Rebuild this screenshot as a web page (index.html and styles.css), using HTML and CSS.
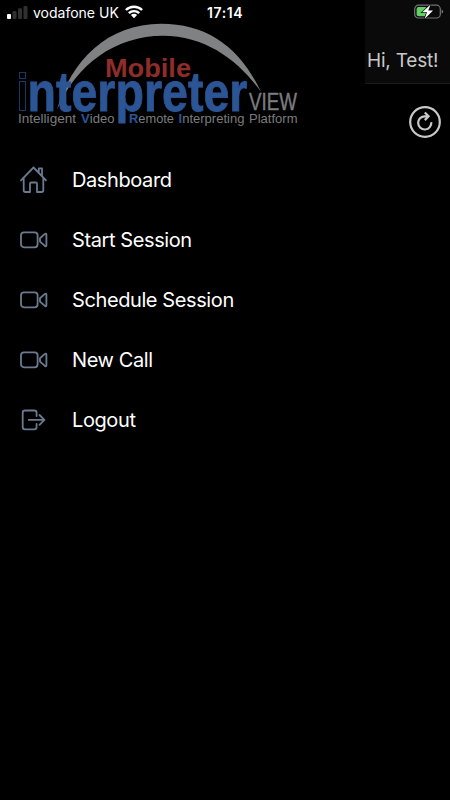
FILE: index.html
```html
<!DOCTYPE html>
<html lang="en">
<head>
  <meta charset="UTF-8">
  <meta name="viewport" content="width=device-width, initial-scale=1.0">
  <title>Mobile Interpreter View</title>
  <link rel="stylesheet" href="styles.css">
</head>
<body>
  <div class="status-bar">
    <svg class="signal" width="21" height="14" viewBox="0 0 21 14">
      <rect x="0" y="9" width="4" height="5" rx="1" fill="#fff"/>
      <rect x="5.5" y="6" width="4" height="8" rx="1" fill="#303030"/>
      <rect x="11" y="3.3" width="4" height="10.7" rx="1" fill="#303030"/>
      <rect x="16.5" y="1" width="4" height="13" rx="1" fill="#303030"/>
    </svg>
    <span class="carrier">vodafone UK</span>
    <svg class="wifi" width="18" height="14" viewBox="0 0 18 14" fill="none" stroke="#fff" stroke-width="2.4">
      <path d="M0.9 5A11.6 11.6 0 0 1 17.1 5"/>
      <path d="M3.8 8.2A7.5 7.5 0 0 1 14.2 8.2"/>
      <path d="M9 13.2L5.9 10.1A4.3 4.3 0 0 1 12.1 10.1Z" fill="#fff" stroke="none"/>
    </svg>
    <span class="time">17:14</span>
    <svg class="battery" width="30" height="16" viewBox="0 0 30 16">
      <rect x="0.7" y="1.2" width="25.6" height="12.8" rx="3.8" fill="none" stroke="#737373" stroke-width="1.2"/>
      <rect x="2.6" y="3" width="10.4" height="9.2" rx="2" fill="#62d164"/>
      <path d="M27.6 5.4q1.6 .7 1.6 2.2t-1.6 2.2z" fill="#737373"/>
      <path d="M16.6 0.6L8.2 8.2H13L10.6 15L19 6.6H14.2Z" fill="#fff" stroke="#0a0a0a" stroke-width="1.4" paint-order="stroke"/>
    </svg>
  </div>

  <div class="screen">
    <nav class="drawer">
      <svg class="logo" width="310" height="112" viewBox="0 20 310 112">
        <path d="M57 110C71 60 108 23.7 161 23.7C207 23.7 240 47 261 92C240 62 207 35.7 163 35.7C116 35.7 76 64 57 110Z" fill="#808183"/>
        <g fill="none" stroke="#1c3764" stroke-width="1">
          <rect x="19.5" y="72.5" width="6" height="6"/>
          <rect x="19.5" y="81.5" width="6" height="29"/>
        </g>
        <text class="logo-mobile" x="105" y="77" textLength="86" lengthAdjust="spacingAndGlyphs">Mobile</text>
        <text class="logo-name" x="27.5" y="110.5" textLength="220" lengthAdjust="spacingAndGlyphs">nterpreter</text>
        <text class="logo-view" x="249" y="110" textLength="48" lengthAdjust="spacingAndGlyphs">VIEW</text>
        <g class="logo-tagline">
          <text x="18" y="123" textLength="58" lengthAdjust="spacingAndGlyphs">Intelligent</text>
          <text x="81" y="123" textLength="33.5" lengthAdjust="spacingAndGlyphs"><tspan>V</tspan>ideo</text>
          <text x="129" y="123" textLength="45" lengthAdjust="spacingAndGlyphs"><tspan>R</tspan>emote</text>
          <text x="178.5" y="123" textLength="66" lengthAdjust="spacingAndGlyphs"><tspan>I</tspan>nterpreting</text>
          <text x="249" y="123" textLength="48.5" lengthAdjust="spacingAndGlyphs">Platform</text>
        </g>
      </svg>

      <ul class="menu">
        <li>
          <svg class="icon" viewBox="0 0 28 28">
            <path d="M1 14.3L13.5 1.5L26 14.3M3.7 12V24.3q0 1.7 1.7 1.7H10V17.8q0-1.3 1.3-1.3h4.4q1.3 0 1.3 1.3V26h4.6q1.7 0 1.7-1.7V12M18.8 6.5V2.3H22v7.5"/>
          </svg>
          <span>Dashboard</span>
        </li>
        <li>
          <svg class="icon" viewBox="0 0 28 28">
            <rect x="1" y="6.3" width="16.6" height="15" rx="3"/>
            <path d="M20 12.2V15.6L24.9 19.9q1.5 1 1.5-.7V8.6q0-1.7-1.5-.7Z"/>
          </svg>
          <span>Start Session</span>
        </li>
        <li>
          <svg class="icon" viewBox="0 0 28 28">
            <rect x="1" y="6.3" width="16.6" height="15" rx="3"/>
            <path d="M20 12.2V15.6L24.9 19.9q1.5 1 1.5-.7V8.6q0-1.7-1.5-.7Z"/>
          </svg>
          <span>Schedule Session</span>
        </li>
        <li>
          <svg class="icon" viewBox="0 0 28 28">
            <rect x="1" y="6.3" width="16.6" height="15" rx="3"/>
            <path d="M20 12.2V15.6L24.9 19.9q1.5 1 1.5-.7V8.6q0-1.7-1.5-.7Z"/>
          </svg>
          <span>New Call</span>
        </li>
        <li>
          <svg class="icon" viewBox="0 0 28 28">
            <path d="M16.6 10V6.8q0-2.3-2.3-2.3H5q-2.3 0-2.3 2.3V21q0 2.3 2.3 2.3h9.3q2.3 0 2.3-2.3V18M8.8 13.9H24.4M19.5 9L24.4 13.9L19.5 18.8"/>
          </svg>
          <span>Logout</span>
        </li>
      </ul>
    </nav>

    <main class="page">
      <header class="page-header">Hi, Test!</header>
      <svg class="refresh" width="34" height="34" viewBox="0 0 34 34">
        <circle cx="17" cy="17" r="14.8"/>
        <path d="M23.3 17.2A6.6 6.6 0 1 1 16.8 11.3H20.3M16.8 7.4L20.6 11.3L16.8 15.1"/>
      </svg>
    </main>
  </div>
</body>
</html>
```
FILE: styles.css
```css
* {
  box-sizing: border-box;
}

body {
  margin: 0;
  background: #000;
  color: #fff;
  font-family: Inter, "Liberation Sans", sans-serif;
}

/* Phone status bar, sits over the drawer and the page */
.status-bar {
  position: absolute;
  top: 0;
  left: 0;
  width: 100%;
  height: 24px;
  padding: 0 6px 0 7px;
  display: flex;
  align-items: center;
  font-size: 14px;
  z-index: 2;
}

.carrier {
  width: 87px;
  margin-left: 5px;
  white-space: nowrap;
}

.wifi {
  margin-left: 5px;
}

.time {
  margin-left: 64px;
  font-weight: 600;
  letter-spacing: 0.6px;
}

.battery {
  margin-left: auto;
}

.screen {
  display: flex;
  height: 100vh;
  overflow: hidden;
}

.drawer {
  width: 365px;
  flex: none;
  padding-top: 20px;
  background: #000;
}

.logo {
  display: block;
}

.logo text {
  font-family: "Liberation Sans", Arial, sans-serif;
}

.logo-mobile {
  font-size: 25.5px;
  font-weight: bold;
  fill: #8f2d2a;
}

.logo-name {
  font-size: 55px;
  font-weight: bold;
  fill: #2c5596;
  stroke: #2c5596;
  stroke-width: 0.8;
}

.logo-view {
  font-size: 23.5px;
  fill: #7b7c7e;
  stroke: #7b7c7e;
  stroke-width: 0.4;
}

.logo-tagline {
  font-size: 13.3px;
  fill: #7b7c7e;
}

.logo-tagline tspan {
  font-weight: bold;
  fill: #2c5596;
}

.menu {
  list-style: none;
  margin: 0;
  padding: 18px 20px 0;
}

.menu li {
  display: flex;
  align-items: center;
  gap: 24px;
  height: 60px;
  font-size: 20px;
  letter-spacing: -0.4px;
}

.icon {
  width: 28px;
  height: 28px;
  fill: none;
  stroke: #6b7a90;
  stroke-width: 1.8;
  stroke-linecap: round;
  stroke-linejoin: round;
}

.page {
  flex: 1;
  display: flex;
  flex-direction: column;
  align-items: flex-end;
}

.page-header {
  width: 100%;
  height: 84px;
  padding: 48px 0 0 2px;
  background: #0a0a0a;
  border-bottom: 1px solid #1b1b1b;
  color: #c8c8c8;
  font-size: 19px;
  letter-spacing: -0.2px;
  line-height: 25px;
  white-space: nowrap;
}

.refresh {
  margin: 21px 8px 0 0;
  fill: none;
  stroke: #c8c8c8;
  stroke-width: 2.2;
}
```
